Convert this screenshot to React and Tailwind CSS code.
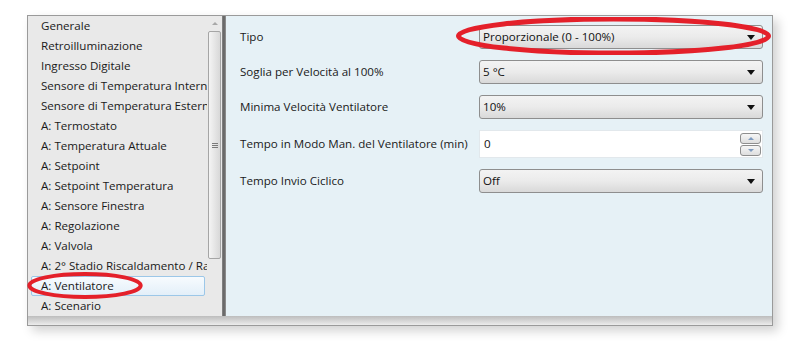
import React from 'react';

const MENU = [
  'Generale',
  'Retroilluminazione',
  'Ingresso Digitale',
  'Sensore di Temperatura Interno',
  'Sensore di Temperatura Esterno',
  'A: Termostato',
  'A: Temperatura Attuale',
  'A: Setpoint',
  'A: Setpoint Temperatura',
  'A: Sensore Finestra',
  'A: Regolazione',
  'A: Valvola',
  'A: 2° Stadio Riscaldamento / Raffreddamento',
  'A: Ventilatore',
  'A: Scenario',
];

const SELECTED = 'A: Ventilatore';

function Arrow() {
  return (
    <svg width="8" height="5" viewBox="0 0 8 5" className="shrink-0">
      <path d="M0 0 L8 0 L4 5 Z" fill="#111" />
    </svg>
  );
}

function Dropdown({ value }) {
  return (
    <div className="h-[24px] w-[284px] flex items-center justify-between pl-[3px] pr-[7px] rounded-[3px] border border-[#8e8e8e] bg-gradient-to-b from-[#f3f3f3] via-[#ebebeb] to-[#d9d9d9] text-[#111]">
      <span>{value}</span>
      <Arrow />
    </div>
  );
}

function Spinner({ value }) {
  return (
    <div className="h-[28px] w-[284px] flex items-center justify-between pl-[4px] pr-[1px] bg-white border border-[#e2e8ec] text-[#111]">
      <span>{value}</span>
      <div className="flex flex-col gap-[1px]">
        <div className="w-[21px] h-[11px] flex items-center justify-center rounded-[3px] border border-[#8e8e8e] bg-gradient-to-b from-[#f6f6f6] to-[#dedede]">
          <svg width="6" height="3" viewBox="0 0 6 3"><path d="M0 3 L6 3 L3 0 Z" fill="#7f9bbf" /></svg>
        </div>
        <div className="w-[21px] h-[11px] flex items-center justify-center rounded-[3px] border border-[#8e8e8e] bg-gradient-to-b from-[#f6f6f6] to-[#dedede]">
          <svg width="6" height="3" viewBox="0 0 6 3"><path d="M0 0 L6 0 L3 3 Z" fill="#7f9bbf" /></svg>
        </div>
      </div>
    </div>
  );
}

// hand-drawn red ring laid over the screenshot
function Ellipse({ className, ry = 17, stroke = 4 }) {
  return (
    <svg className={`absolute pointer-events-none ${className}`} viewBox="0 0 100 40" preserveAspectRatio="none">
      <ellipse cx="50" cy="20" rx="48" ry={ry} fill="none" stroke="#e4202a" strokeWidth={stroke} vectorEffect="non-scaling-stroke" />
    </svg>
  );
}

export default function App() {
  return (
    <div className="w-[790px] h-[345px] bg-white pt-[15px] pl-[27px] font-['Open_Sans','Noto_Sans',sans-serif] text-[11.6px]">
      <div className="relative w-[746px] h-[311px] border border-[#9a9a9a] shadow-[5px_5px_10px_rgba(0,0,0,0.18)] flex flex-col">
        <div className="flex h-[300px]">
          {/* left tree */}
          <div className="w-[179px] bg-[#e9e9e9] overflow-hidden">
            {MENU.map(item => (
              <div
                key={item}
                className={
                  item === SELECTED
                    ? 'h-[20px] ml-[3px] mr-[2px] pl-[9px] flex items-center whitespace-nowrap text-[#1a1a1a] border border-[#9cc7e8] rounded-[2px] bg-gradient-to-b from-[#f7fbfe] to-[#e3eff9]'
                    : 'h-[20px] pl-[13px] flex items-center whitespace-nowrap text-[#1a1a1a]'
                }
              >
                {item}
              </div>
            ))}
          </div>
          {/* scrollbar */}
          <div className="w-[15px] bg-[#e9e9e9] flex flex-col items-center">
            <div className="h-[15px] flex items-center justify-center">
              <svg width="6" height="3" viewBox="0 0 6 3"><path d="M0 3 L6 3 L3 0 Z" fill="#a8a8a8" /></svg>
            </div>
            <div className="w-[13px] h-[228px] rounded-[2px] border border-[#a5a5a5] bg-gradient-to-r from-[#f4f4f4] to-[#d8d8d8] flex items-center justify-center">
              <div className="flex flex-col gap-[1px]">
                <div className="w-[6px] h-[1px] bg-[#7a7a7a]" />
                <div className="w-[6px] h-[1px] bg-[#7a7a7a]" />
                <div className="w-[6px] h-[1px] bg-[#7a7a7a]" />
              </div>
            </div>
          </div>
          {/* splitter */}
          <div className="w-[4px] bg-gradient-to-r from-[#8a8a8a] via-[#5f5f5f] to-[#9a9a9a]" />
          {/* right panel */}
          <div className="flex-1 bg-[#e6f1f6] pt-[9px] pl-[14px]">
            <div className="grid grid-cols-[239px_284px] gap-y-[11px] items-center text-[#1a1a1a]">
              <span>Tipo</span>
              <Dropdown value="Proporzionale (0 - 100%)" />
              <span>Soglia per Velocità al 100%</span>
              <Dropdown value="5 °C" />
              <span>Minima Velocità Ventilatore</span>
              <Dropdown value="10%" />
              <span>Tempo in Modo Man. del Ventilatore (min)</span>
              <Spinner value="0" />
              <span>Tempo Invio Ciclico</span>
              <Dropdown value="Off" />
            </div>
          </div>
        </div>
        <div className="h-[9px] bg-gradient-to-b from-[#bdbdbd] to-[#ececec]" />
        <Ellipse className="left-[-1px] top-[256px] w-[116px] h-[27px]" />
        <Ellipse className="left-[424px] top-[1px] w-[323px] h-[38px]" ry={18} stroke={5} />
      </div>
    </div>
  );
}
